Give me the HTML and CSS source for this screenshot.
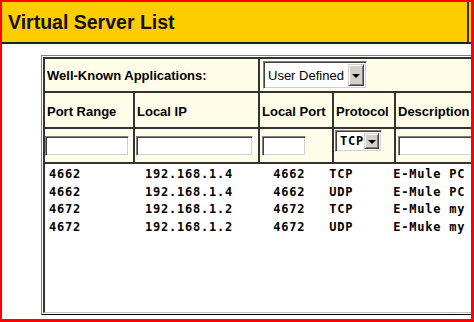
FILE: index.html
```html
<!DOCTYPE html>
<html lang="en">
<head>
    <meta charset="UTF-8">
    <meta name="viewport" content="width=device-width, initial-scale=1.0">
    <title>Virtual Server List</title>
    <link rel="stylesheet" href="styles.css">
</head>
<body>
    <div class="screen">
        <div class="page-header">
            <h1 class="page-title">Virtual Server List</h1>
        </div>

        <div class="server-frame">
            <div class="server-box">
                <div class="server-form">
                    <div class="cell label-cell">Well-Known Applications:</div>
                    <div class="cell app-cell">
                        <div class="dropdown app-select">
                            <span class="dropdown-value">User Defined</span>
                            <span class="dropdown-button"></span>
                        </div>
                    </div>

                    <div class="cell head-cell">Port Range</div>
                    <div class="cell head-cell">Local IP</div>
                    <div class="cell head-cell">Local Port</div>
                    <div class="cell head-cell">Protocol</div>
                    <div class="cell head-cell">Description</div>

                    <div class="cell input-cell"><input type="text" class="field range-field"></div>
                    <div class="cell input-cell"><input type="text" class="field ip-field"></div>
                    <div class="cell input-cell"><input type="text" class="field port-field"></div>
                    <div class="cell input-cell proto-cell">
                        <div class="dropdown proto-select">
                            <span class="dropdown-value">TCP</span>
                            <span class="dropdown-button"></span>
                        </div>
                    </div>
                    <div class="cell input-cell"><input type="text" class="field desc-field"></div>
                </div>

<pre class="server-list">4662        192.168.1.4     4662   TCP     E-Mule PC
4662        192.168.1.4     4662   UDP     E-Mule PC
4672        192.168.1.2     4672   TCP     E-Mule my
4672        192.168.1.2     4672   UDP     E-Muke my</pre>
            </div>
        </div>
    </div>
</body>
</html>
```

FILE: styles.css
```css
* {
    margin: 0;
    padding: 0;
    box-sizing: border-box;
}

body {
    font-family: "Liberation Sans", Arial, sans-serif;
    background: #fff;
    color: #000;
}

.screen {
    width: 474px;
    height: 322px;
    border: solid #f00;
    border-width: 2px 3px 3px 2px;
    overflow: hidden;
    background: #fff;
}

.page-header {
    width: 600px;
    background: #ffcc00;
    border-bottom: 2px solid #222;
}

.page-title {
    width: 467px;
    height: 40px;
    line-height: 40px;
    padding-left: 6px;
    border-right: 2px solid #333;
    font-size: 19.5px;
    font-weight: bold;
    color: #111;
}

.server-frame {
    width: 560px;
    height: 260px;
    margin: 11px 0 0 39px;
    padding: 1px 0 1px 1px;
    border-top: 1px solid #808080;
    border-left: 1px solid #808080;
    border-bottom: 1px solid #000;
    background: #fff;
}

.server-box {
    height: 100%;
    border-top: 2px solid #333;
    border-left: 2px solid #333;
    border-bottom: 1px solid #c0c0c0;
    display: flex;
    flex-direction: column;
}

.server-form {
    display: grid;
    grid-template-columns: 88px 123px 72px 60px 200px;
    grid-template-rows: 32px 34px 33px;
    gap: 2px;
    padding-bottom: 2px;
    background: #333;
}

.cell {
    display: flex;
    align-items: center;
    padding-left: 2px;
    background: #fffce8;
    font-size: 13px;
    white-space: nowrap;
}

.label-cell {
    grid-column: span 2;
    font-weight: bold;
}

.app-cell {
    grid-column: span 3;
    padding-left: 3px;
}

.head-cell {
    font-weight: bold;
    padding-top: 2px;
}

.input-cell {
    padding-left: 1px;
}

.proto-cell {
    align-items: flex-start;
    padding-top: 1px;
}

.field {
    height: 20px;
    border: 1px solid;
    border-color: #808080 #fff #fff #808080;
    box-shadow: inset 1px 1px 0 #404040, inset -1px -1px 0 #d4d0c8;
    background: #fff;
    outline: none;
}

.range-field { width: 84px; margin-left: -1px; }
.ip-field { width: 117px; }
.port-field { width: 44px; margin-left: 1px; }
.desc-field { width: 140px; margin-left: 1px; }

.dropdown {
    display: flex;
    align-items: stretch;
    border: 1px solid;
    border-color: #808080 #fff #fff #808080;
    box-shadow: inset 1px 1px 0 #404040, inset -1px -1px 0 #d4d0c8;
    background: #fff;
    padding: 2px;
}

.dropdown-value {
    flex: 1;
    display: flex;
    align-items: center;
    padding-left: 2px;
}

.dropdown-button {
    width: 16px;
    display: flex;
    align-items: center;
    justify-content: center;
    background: #d4d0c8;
    border: 1px solid;
    border-color: #d4d0c8 #404040 #404040 #d4d0c8;
    box-shadow: inset 1px 1px 0 #fff, inset -1px -1px 0 #808080;
}

.dropdown-button::after {
    content: "";
    border-top: 4px solid #000;
    border-left: 4px solid transparent;
    border-right: 4px solid transparent;
    margin-top: 1px;
}

.app-select {
    width: 104px;
    height: 28px;
}

.proto-select {
    width: 47px;
    height: 22px;
}

.proto-select .dropdown-value {
    font-family: "DejaVu Sans Mono", monospace;
    font-size: 12px;
    font-weight: bold;
    letter-spacing: 0.78px;
}

.server-list {
    flex: 1;
    padding: 2px 0 0 4px;
    background: #fff;
    font-family: "DejaVu Sans Mono", monospace;
    font-size: 12px;
    font-weight: bold;
    letter-spacing: 0.78px;
    line-height: 17.7px;
    color: #000;
}
```
